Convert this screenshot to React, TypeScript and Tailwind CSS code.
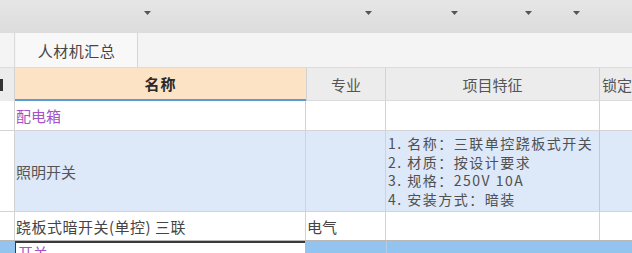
const font = { fontFamily: '"Noto Sans CJK SC", "Noto Sans", sans-serif' };

const arrows = [147, 368, 454, 528, 576];

function Caret() {
  return (
    <svg width="7" height="4" viewBox="0 0 7 4" className="block">
      <path d="M0 0h7L3.5 4z" fill="#555" />
    </svg>
  );
}

const features = ['1. 名称：三联单控跷板式开关', '2. 材质：按设计要求', '3. 规格：250V 10A', '4. 安装方式：暗装'];

export default function App() {
  return (
    <div className="w-[632px] h-[253px] overflow-hidden bg-white text-[14px] leading-none" style={font}>
      {/* toolbar strip */}
      <div className="h-[33px] bg-gradient-to-b from-[#e6e6e6] to-[#dcdcdc] flex">
        {arrows.map((x, i) => (
          <div key={x} className={i === 0 ? 'ml-[144px] mt-[11px]' : 'mt-[11px]'} style={i === 0 ? undefined : { marginLeft: x - arrows[i - 1] - 7 }}>
            <Caret />
          </div>
        ))}
      </div>

      {/* tabs */}
      <div className="h-[35px] bg-[#f4f4f4] flex items-stretch border-b border-[#dcdcdc]">
        <div className="w-[15px] border-r border-[#dadada]" />
        <div className="w-[122px] ml-[1px] bg-[#f8f8f8] border-r border-[#d6d6d6] flex items-center justify-center text-[15px] text-[#454545] tracking-[0.5px]">
          人材机汇总
        </div>
      </div>

      {/* header */}
      <div className="h-[33px] grid grid-cols-[15px_291px_80px_214px_32px] text-[15px]">
        <div className="bg-[#ececec] border-r border-[#d2d2d2] flex items-center">
          <div className="w-[3px] h-[12px] bg-[#333]" />
        </div>
        <div className="bg-[#fde3c6] border-b-2 border-[#5b9bd5] flex items-center justify-center font-bold text-[#2a2a2a] tracking-[1px]">名称</div>
        <div className="bg-[#ececec] border-l border-r border-[#d2d2d2] border-b border-b-[#dadada] flex items-center justify-center text-[#555]">专业</div>
        <div className="bg-[#ececec] border-r border-[#d2d2d2] border-b border-b-[#dadada] flex items-center justify-center text-[#555]">项目特征</div>
        <div className="bg-[#ececec] border-b border-[#dadada] flex items-center pl-[2px] text-[#555] whitespace-nowrap">锁定</div>
      </div>

      {/* row 1 */}
      <div className="h-[30px] grid grid-cols-[15px_291px_80px_214px_32px] border-b border-[#d4d4d4] text-[15px]">
        <div className="border-r border-[#d2d2d2]" />
        <div className="border-r border-[#d2d2d2] flex items-center pl-[1px] text-[#a452c6]">配电箱</div>
        <div className="border-r border-[#d2d2d2]" />
        <div className="border-r border-[#d2d2d2]" />
        <div />
      </div>

      {/* row 2 */}
      <div className="h-[81px] grid grid-cols-[15px_291px_80px_214px_32px] bg-[#dde8f8] border-b border-[#cfd4dc] text-[15px]">
        <div className="bg-white border-r border-[#d2d2d2]" />
        <div className="border-r border-[#d2d2d2] flex items-center pl-[1px] text-[#555]">照明开关</div>
        <div className="border-r border-[#d2d2d2]" />
        <div className="border-r border-[#c8c8c8] flex flex-col justify-center pl-[2px] text-[14px] leading-[18.5px] tracking-[1.5px] text-[#505050] whitespace-nowrap">
          {features.map((f) => (
            <div key={f}>{f}</div>
          ))}
        </div>
        <div />
      </div>

      {/* row 3 */}
      <div className="h-[29px] grid grid-cols-[15px_291px_80px_214px_32px] border-b border-[#b8b8b8] text-[15px]">
        <div className="border-r border-[#d2d2d2]" />
        <div className="border-r border-[#d2d2d2] flex items-center pl-[1px] text-[#444] tracking-[0.5px]">跷板式暗开关(单控) 三联</div>
        <div className="border-r border-[#d2d2d2] flex items-center pl-[1px] text-[#444]">电气</div>
        <div className="border-r border-[#d2d2d2]" />
        <div />
      </div>

      {/* row 4 selected */}
      <div className="h-[20px] grid grid-cols-[15px_290px_81px_214px_32px] bg-[#93c4ef] text-[15px]">
        <div />
        <div className="bg-white border-t-2 border-l border-[#3a3a3a] flex items-start pl-[2px] pt-[2px] text-[#a452c6]">开关</div>
        <div />
        <div className="border-l border-[#b5cde6]" />
        <div />
      </div>
    </div>
  );
}
